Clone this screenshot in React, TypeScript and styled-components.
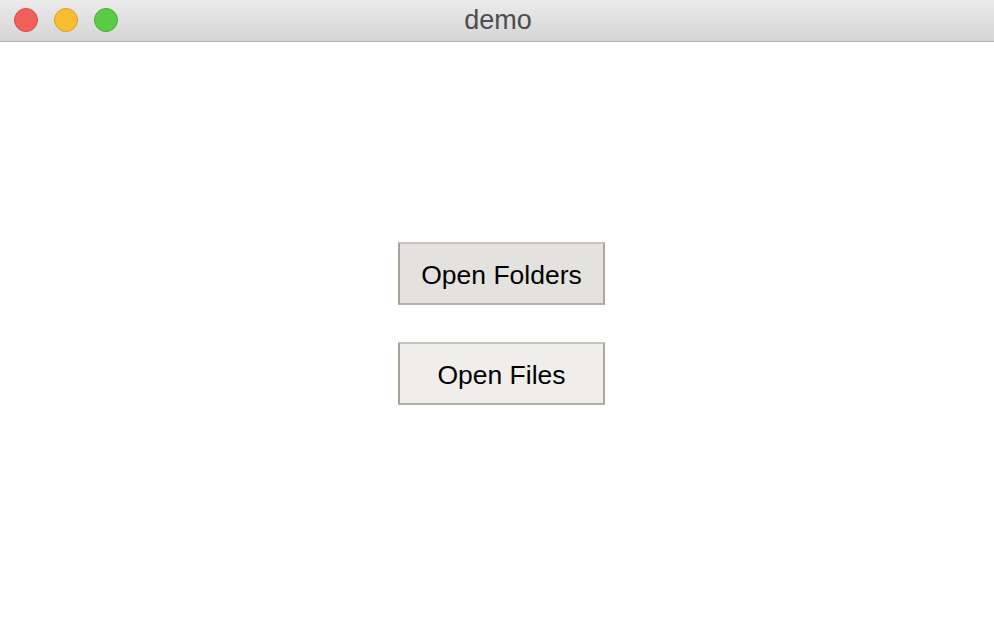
import React from "react";
import styled, { createGlobalStyle } from "styled-components";

const Global = createGlobalStyle`
  html, body { margin: 0; padding: 0; background: #ffffff; }
  body { font-family: "Liberation Sans", Arial, sans-serif; }
`;

const Window = styled.div`
  width: 994px;
  height: 638px;
  display: flex;
  flex-direction: column;
  background: #ffffff;
  overflow: hidden;
`;

const TitleBar = styled.div`
  position: relative;
  height: 41px;
  flex: none;
  display: flex;
  align-items: center;
  justify-content: center;
  background: linear-gradient(#ebebeb, #d5d5d5);
  border-bottom: 1px solid #b4b4b4;
`;

const Lights = styled.div`
  position: absolute;
  left: 14px;
  top: 8px;
  display: flex;
  gap: 16px;
`;

const Light = styled.span<{ $fill: string; $edge: string }>`
  width: 24px;
  height: 24px;
  border-radius: 50%;
  box-sizing: border-box;
  background: ${(p) => p.$fill};
  border: 1px solid ${(p) => p.$edge};
`;

const Title = styled.div`
  font-size: 27px;
  color: #4d4d4d;
  line-height: 1;
  margin-top: 0px;
  margin-left: 2px;
`;

const Content = styled.div`
  flex: 1;
  display: flex;
  flex-direction: column;
  align-items: center;
  padding-top: 200px;
  gap: 37px;
  padding-left: 9px;
`;

const Button = styled.button<{ $active?: boolean }>`
  width: 207px;
  height: 63px;
  box-sizing: border-box;
  font-family: "Liberation Sans", Arial, sans-serif;
  font-size: 26.5px;
  color: #000000;
  background: ${(p) => (p.$active ? "#e3e2df" : "#efeeeb")};
  border-style: solid;
  border-width: 2px;
  border-color: #c8c5be #aaa79f #b3b0a8 #a5a29a;
  padding: 3px 0 0 0;
  cursor: default;
`;

export default function App() {
  return (
    <>
      <Global />
      <Window>
        <TitleBar>
          <Lights>
            <Light $fill="#f0605a" $edge="#de4a43" />
            <Light $fill="#f8bd30" $edge="#dea020" />
            <Light $fill="#5acb45" $edge="#43b030" />
          </Lights>
          <Title>demo</Title>
        </TitleBar>
        <Content>
          <Button $active>Open Folders</Button>
          <Button>Open Files</Button>
        </Content>
      </Window>
    </>
  );
}
